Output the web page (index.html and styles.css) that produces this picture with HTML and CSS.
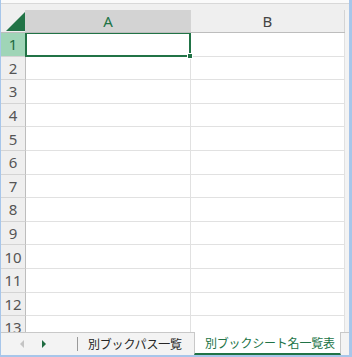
FILE: index.html
```html
<!DOCTYPE html>
<html lang="ja">
<head>
    <meta charset="UTF-8">
    <title>Sheet</title>
    <link rel="stylesheet" href="styles.css">
</head>
<body>
    <div class="window">
        <div class="top-strip"></div>
        <div class="sheet">
            <div class="head-row">
                <div class="corner"><span class="corner-tri"></span></div>
                <div class="col-head active">A</div>
                <div class="col-head">B</div>
            </div>
            <div class="rows">
                <div class="row"><div class="row-head active">1</div><div class="cell a1"><span class="selection"><span class="handle"></span></span></div><div class="cell"></div></div>
                <div class="row"><div class="row-head">2</div><div class="cell"></div><div class="cell"></div></div>
                <div class="row"><div class="row-head">3</div><div class="cell"></div><div class="cell"></div></div>
                <div class="row"><div class="row-head">4</div><div class="cell"></div><div class="cell"></div></div>
                <div class="row"><div class="row-head">5</div><div class="cell"></div><div class="cell"></div></div>
                <div class="row"><div class="row-head">6</div><div class="cell"></div><div class="cell"></div></div>
                <div class="row"><div class="row-head">7</div><div class="cell"></div><div class="cell"></div></div>
                <div class="row"><div class="row-head">8</div><div class="cell"></div><div class="cell"></div></div>
                <div class="row"><div class="row-head">9</div><div class="cell"></div><div class="cell"></div></div>
                <div class="row"><div class="row-head">10</div><div class="cell"></div><div class="cell"></div></div>
                <div class="row"><div class="row-head">11</div><div class="cell"></div><div class="cell"></div></div>
                <div class="row"><div class="row-head">12</div><div class="cell"></div><div class="cell"></div></div>
                <div class="row"><div class="row-head">13</div><div class="cell"></div><div class="cell"></div></div>
            </div>
        </div>
        <div class="tab-bar">
            <div class="nav">
                <svg class="nav-arrow" width="6" height="8" viewBox="0 0 6 8"><path d="M5 0 L1 4 L5 8 Z" fill="#c4c4c4"/></svg>
                <svg class="nav-arrow" width="6" height="8" viewBox="0 0 6 8"><path d="M1 0 L5 4 L1 8 Z" fill="#1e6b41"/></svg>
            </div>
            <div class="tab tab-path">別ブックパス一覧</div>
            <div class="tab current">別ブックシート名一覧表</div>
        </div>
    </div>
</body>
</html>
```

FILE: styles.css
```css
:root {
    --excel-green: #217346;
    --head-bg: #efefef;
    --grid-line: #e1e1e1;
    --head-line: #d4d4d4;
    --frame-blue: #a7c6ea;
}

* {
    margin: 0;
    padding: 0;
    box-sizing: border-box;
}

body {
    width: 352px;
    height: 357px;
    overflow: hidden;
    background: #ffffff;
    font-family: "Noto Sans CJK JP", "Liberation Sans", sans-serif;
}

.window {
    width: 352px;
    height: 357px;
    display: flex;
    flex-direction: column;
    border-left: 1px solid var(--frame-blue);
    border-right: 3px solid var(--frame-blue);
    border-bottom: 2px solid var(--frame-blue);
}

.top-strip {
    height: 10px;
    flex: none;
    background: var(--head-bg);
    border-top: 3px solid #fafafa;
    box-shadow: inset 0 1px 0 #d8d8d8;
}

.sheet {
    flex: 1;
    display: flex;
    flex-direction: column;
    overflow: hidden;
    border-right: 4px solid #f3f3f3;
}

.head-row,
.row {
    display: grid;
    grid-template-columns: 25px 165px 1fr;
}

.head-row {
    height: 23px;
    flex: none;
    background: var(--head-bg);
    border-bottom: 1px solid #bdbdbd;
}

.corner {
    position: relative;
    border-right: 1px solid var(--head-line);
}

.corner-tri {
    position: absolute;
    left: 5px;
    top: 2px;
    width: 19px;
    height: 19px;
    background: var(--excel-green);
    clip-path: polygon(100% 0, 100% 100%, 0 100%);
}

.col-head {
    display: flex;
    align-items: center;
    justify-content: center;
    font-family: "Noto Sans", "Liberation Sans", sans-serif;
    font-size: 15px;
    color: #444444;
    border-right: 1px solid var(--head-line);
}

.col-head.active {
    background: #d3d3d3;
    color: var(--excel-green);
}

.rows {
    flex: 1;
    overflow: hidden;
}

.row {
    height: 23.6px;
}

.row-head {
    display: flex;
    align-items: center;
    justify-content: center;
    background: var(--head-bg);
    border-right: 1px solid #bdbdbd;
    border-bottom: 1px solid var(--head-line);
    font-family: "Noto Sans", "Liberation Sans", sans-serif;
    font-size: 15px;
    color: #555555;
}

.row-head.active {
    background: #9fd5b7;
    color: #1e6b41;
}

.cell {
    border-right: 1px solid var(--grid-line);
    border-bottom: 1px solid var(--grid-line);
}

.a1 {
    position: relative;
}

.selection {
    position: absolute;
    left: -1px;
    top: -1px;
    right: -1px;
    bottom: -1px;
    border: 2px solid var(--excel-green);
}

.handle {
    position: absolute;
    right: -4px;
    bottom: -4px;
    width: 6px;
    height: 6px;
    background: var(--excel-green);
    border: 1px solid #ffffff;
}

.tab-bar {
    height: 23px;
    flex: none;
    display: flex;
    align-items: stretch;
    background: #f3f3f3;
    border-top: 1px solid #c8c8c8;
    font-size: 12px;
    letter-spacing: -0.2px;
    white-space: nowrap;
}

.nav {
    width: 77px;
    flex: none;
    display: flex;
    align-items: center;
    padding-left: 18px;
    gap: 16px;
    border-right: 1px solid #9a9a9a;
    margin: 4px 0;
}

.tab {
    flex: none;
    display: flex;
    align-items: center;
    line-height: 1;
    padding-left: 10px;
    color: #262626;
}

.tab-path {
    width: 116px;
}

.tab.current {
    width: 147px;
    background: #ffffff;
    color: var(--excel-green);
    border-bottom: 2px solid var(--excel-green);
    border-left: 1px solid #c8c8c8;
    border-right: 1px solid #c8c8c8;
    margin-top: -1px;
}
```
